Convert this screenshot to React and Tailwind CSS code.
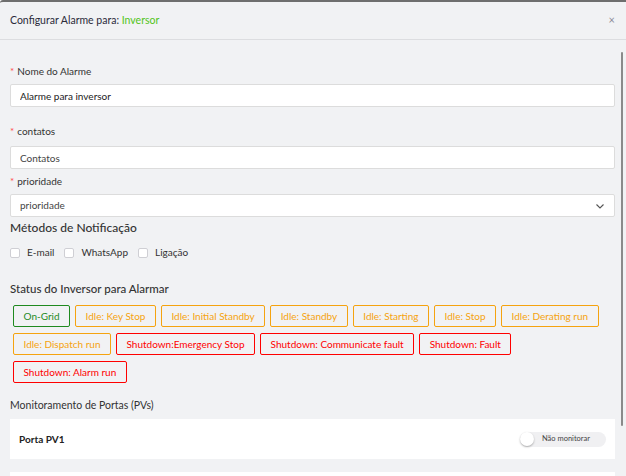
import React, { useState } from "react";

const statuses = [
    { label: "On-Grid", tone: "green" },
    { label: "Idle: Key Stop", tone: "orange" },
    { label: "Idle: Initial Standby", tone: "orange" },
    { label: "Idle: Standby", tone: "orange" },
    { label: "Idle: Starting", tone: "orange" },
    { label: "Idle: Stop", tone: "orange" },
    { label: "Idle: Derating run", tone: "orange" },
    { label: "Idle: Dispatch run", tone: "orange" },
    { label: "Shutdown:Emergency Stop", tone: "red" },
    { label: "Shutdown: Communicate fault", tone: "red" },
    { label: "Shutdown: Fault", tone: "red" },
    { label: "Shutdown: Alarm run", tone: "red" },
];

const toneClass = {
    green: "border-[#1f8a1f] text-[#1f8a1f]",
    orange: "border-[#f5a30f] text-[#f5a30f]",
    red: "border-[#f00] text-[#f00]",
};

function Label({ children }) {
    return (
        <div className="h-[14px] flex items-center text-[10px] text-[#333]">
            <span className="text-[#ff4d4f] mr-[3px] text-[10px]">*</span>
            {children}
        </div>
    );
}

function App() {
    const [methods, setMethods] = useState({ email: false, whatsapp: false, ligacao: false });

    return (
        <div
            className="relative h-[476px] overflow-hidden bg-[#f1f2f4] border-t-2 border-[#6e6e6e] rounded-tl-[3px] text-[#333]"
            style={{ fontFamily: 'Lato, "Noto Sans", sans-serif' }}
        >
            {/* Header */}
            <div className="h-[38px] flex items-center justify-between px-[10px] border-b border-[#dcdde0]">
                <div className="text-[10.5px] text-[#2b2b3a]">
                    Configurar Alarme para: <span className="text-[#52c41a]">Inversor</span>
                </div>
                <button className="text-[11px] text-[#8c8c99] mr-[1px]">×</button>
            </div>

            {/* Body */}
            <div className="px-[10px] pt-[24px]">
                <Label>Nome do Alarme</Label>
                <input
                    defaultValue="Alarme para inversor"
                    className="mt-[6px] w-[605px] h-[23px] px-[9px] bg-white border border-[#dcdcdc] rounded-[2px] text-[10px] text-[#222] outline-none"
                />

                <div className="mt-[17px]">
                    <Label>contatos</Label>
                </div>
                <input
                    placeholder="Contatos"
                    className="mt-[8px] w-[605px] h-[23px] px-[9px] bg-white border border-[#dcdcdc] rounded-[2px] text-[10px] placeholder:text-[#444] outline-none"
                />

                <div className="mt-[5px]">
                    <Label>prioridade</Label>
                </div>
                <div className="mt-[6px] w-[605px] h-[23px] px-[9px] bg-white border border-[#dcdcdc] rounded-[2px] flex items-center justify-between">
                    <span className="text-[10px] text-[#444]">prioridade</span>
                    <svg width="10" height="10" viewBox="0 0 10 10" fill="none" stroke="#555" strokeWidth="1.1">
                        <path d="M1.5 3.5 L5 7 L8.5 3.5" />
                    </svg>
                </div>

                <div className="mt-[3px] text-[12px] font-medium text-[#333] h-[16px] flex items-center">
                    Métodos de Notificação
                </div>

                <div className="mt-[9px] flex items-center gap-[10px] text-[10px] text-[#333]">
                    {[
                        ["email", "E-mail"],
                        ["whatsapp", "WhatsApp"],
                        ["ligacao", "Ligação"],
                    ].map(([key, text]) => (
                        <label key={key} className="flex items-center gap-[7px]">
                            <span
                                onClick={() => setMethods({ ...methods, [key]: !methods[key] })}
                                className="w-[10px] h-[10px] bg-white border border-[#cfcfd4] rounded-[2px]"
                            />
                            {text}
                        </label>
                    ))}
                </div>

                <div className="mt-[21px] text-[11.5px] font-medium text-[#333] h-[16px] flex items-center">
                    Status do Inversor para Alarmar
                </div>

                <div className="mt-[8px] pl-[3px] flex flex-wrap gap-x-[5px] gap-y-[6px] w-[600px]">
                    {statuses.map((s) => (
                        <button
                            key={s.label}
                            className={`h-[22px] px-[9.5px] border rounded-[2px] text-[10px] leading-none ${toneClass[s.tone]}`}
                        >
                            {s.label}
                        </button>
                    ))}
                </div>

                <div className="mt-[15px] text-[10.5px] text-[#333] h-[16px] flex items-center">
                    Monitoramento de Portas (PVs)
                </div>

                <div className="mt-[5px] w-[605px] h-[40px] bg-white flex items-center justify-between px-[9px]">
                    <span className="text-[10px] font-bold text-[#222]">Porta PV1</span>
                    <div className="w-[86px] h-[15px] rounded-full bg-[#f0f0f2] flex items-center">
                        <span className="w-[14px] h-[14px] rounded-full bg-white shadow-[0_1px_2px_rgba(0,0,0,0.3)]" />
                        <span className="ml-[8px] text-[7.5px] text-[#444]">Não monitorar</span>
                    </div>
                </div>

                <div className="mt-[13px] w-[605px] h-[40px] bg-white" />
            </div>

            {/* scrollbar */}
            <div className="absolute right-[3px] top-[50px] w-[2px] h-[374px] bg-[#8a8a8a] rounded" />
        </div>
    );
}

export default App;
